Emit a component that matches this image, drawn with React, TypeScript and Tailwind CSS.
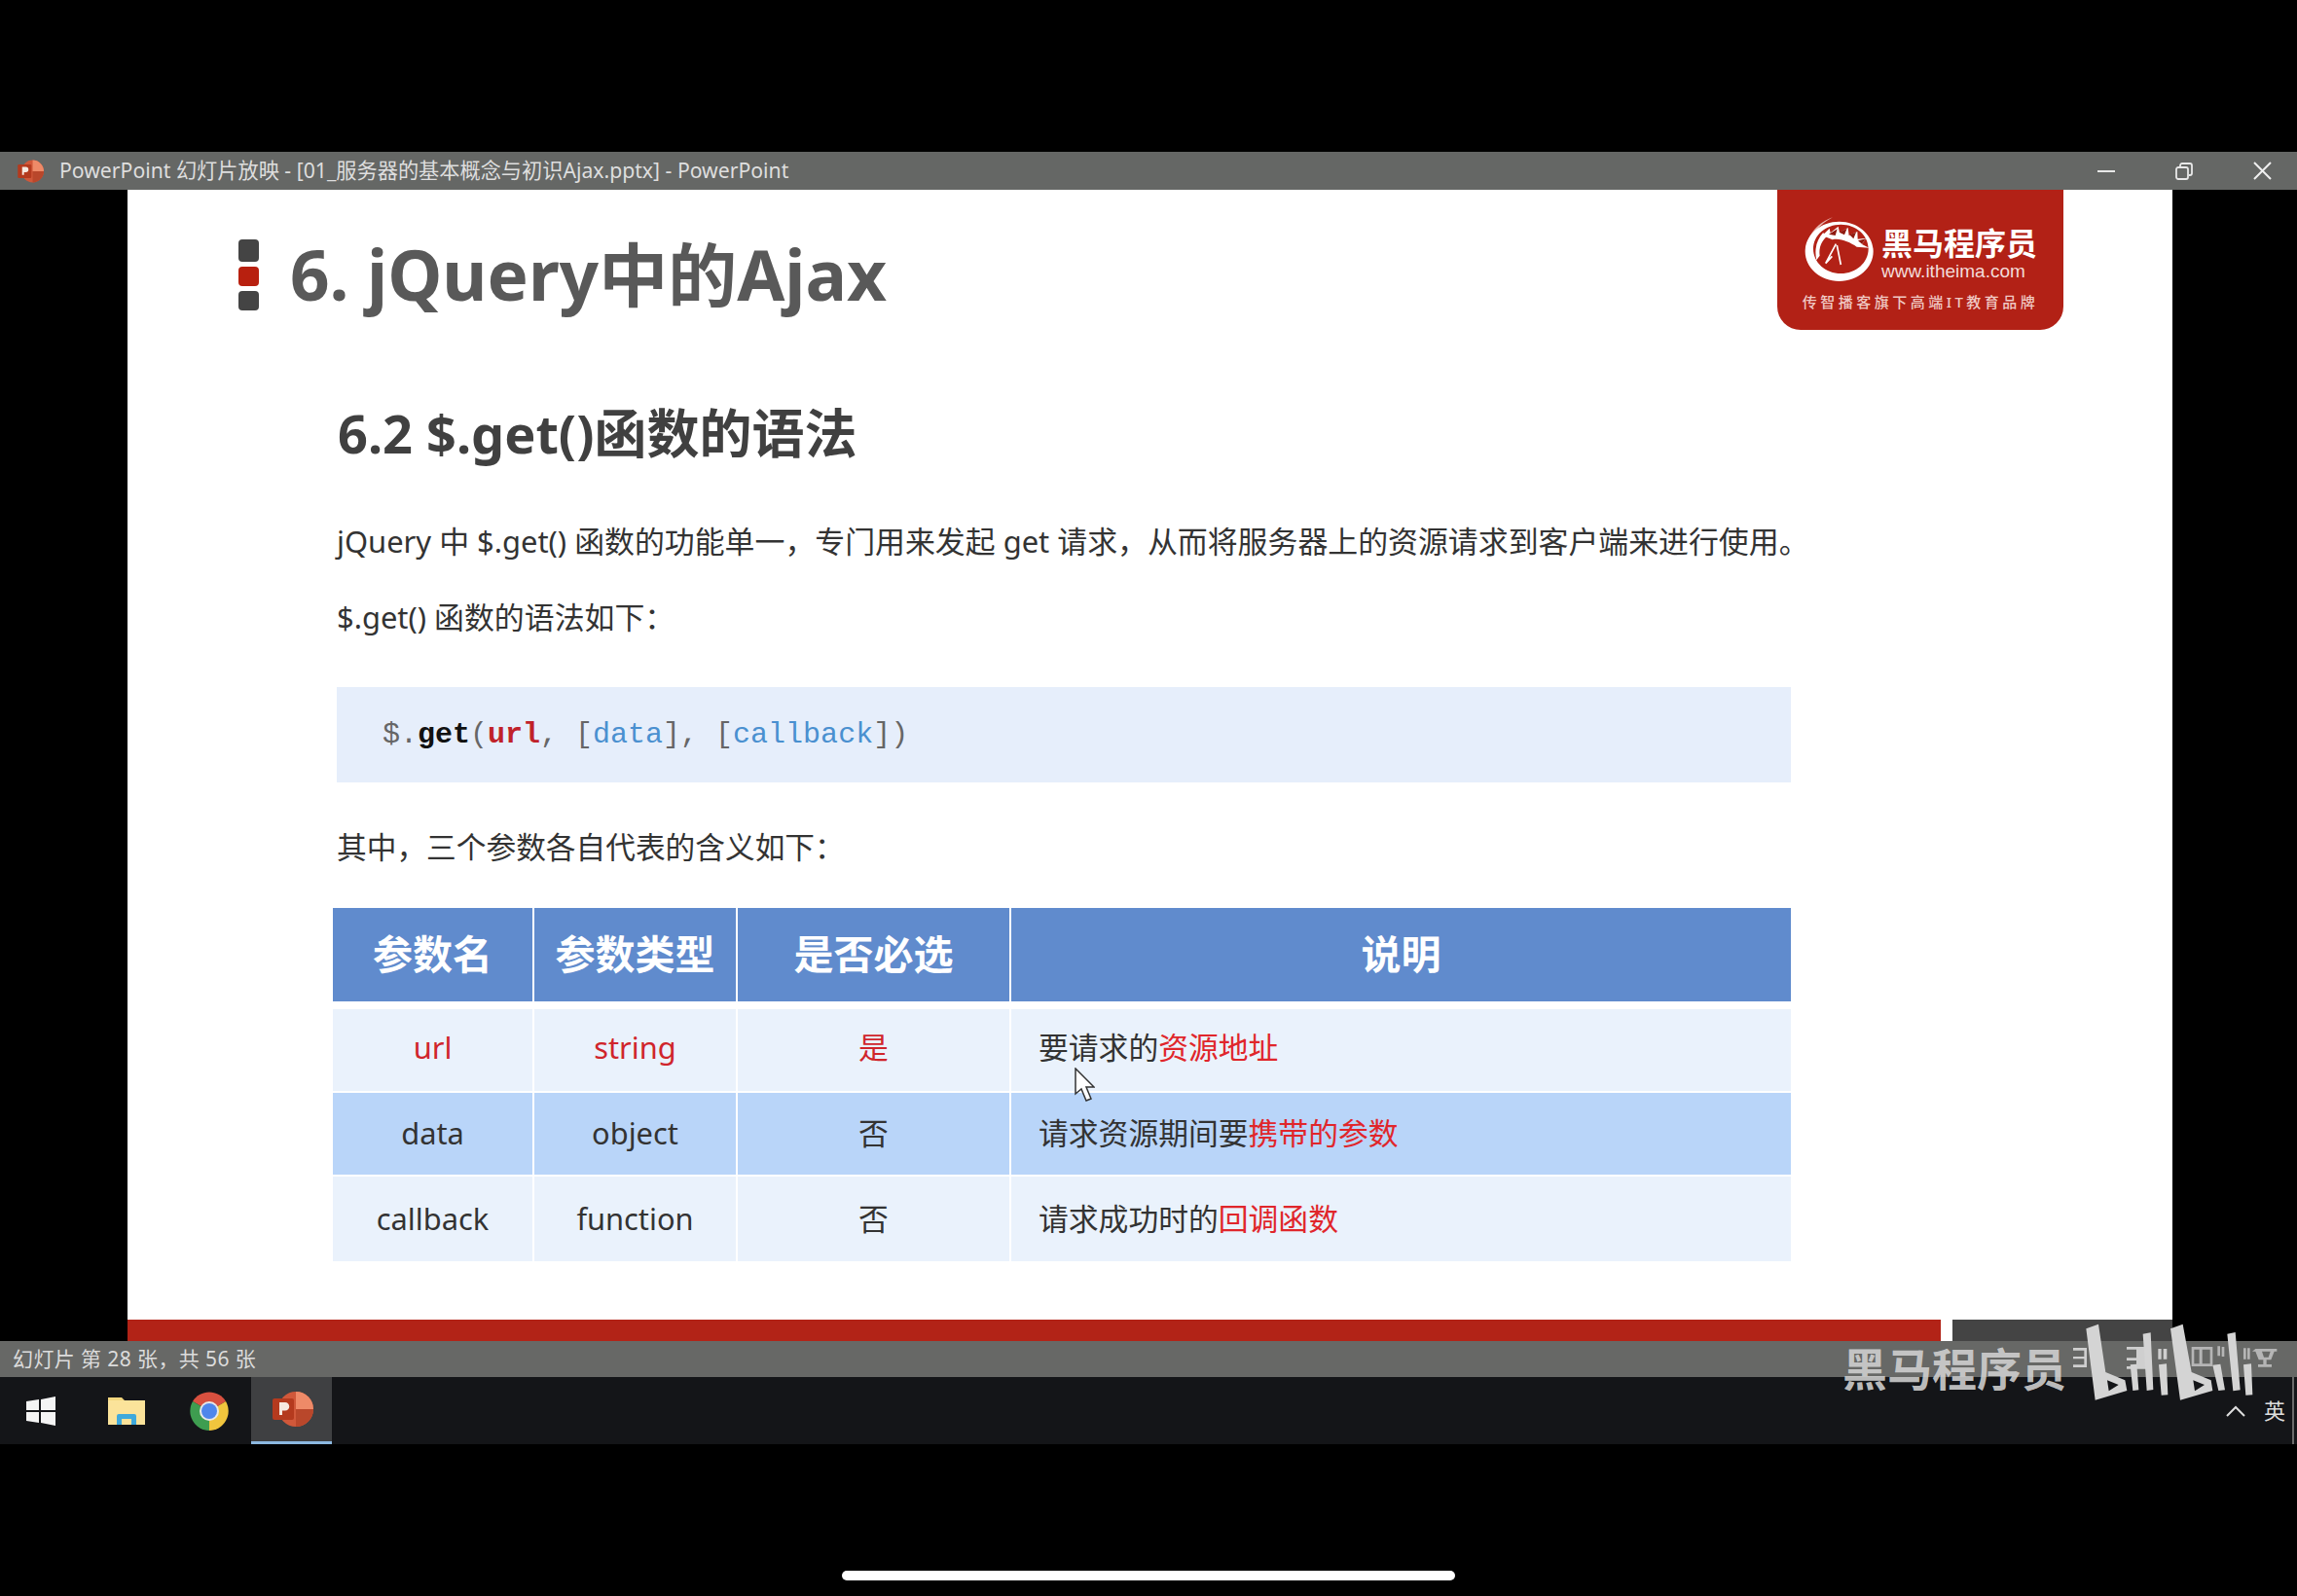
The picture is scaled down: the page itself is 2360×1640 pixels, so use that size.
const PptIcon = ({ size }: { size: number }) => (
  <svg width={size} height={size} viewBox="0 0 44 44">
    <circle cx="26" cy="22" r="18" fill="#d0583a" />
    <path d="M26 4a18 18 0 0 1 18 18H26z" fill="#ee8a68" />
    <path d="M26 22h18a18 18 0 0 1-18 18z" fill="#b9472b" />
    <rect x="2" y="11" width="22" height="22" rx="2" fill="#b43a1e" />
    <path d="M9 28V15h6a4.200 4.200 0 0 1 0 8.500h-3V28z" fill="#f6e8df" />
  </svg>
);

const HorseLogo = () => (
  <svg width="75" height="72" viewBox="40 30 225 216" fill="none">
    <path d="M130 40C85 55 50 95 46 145 56 100 90 60 130 40z" fill="#e8b4ad" />
    <path fillRule="evenodd" d="M150 53c58 0 105 41 105 92s-47 92-105 92S45 196 45 145 92 53 150 53zM155 62c-47 0-85 33-85 75s38 76 85 76 85-34 85-76-38-75-85-75z" fill="#ffffff" />
    <path d="M98 96l22-22 3 14 24-20 4 19 26-15 3 24 26-12 1 23 26-3-13 19 22 11-38-3c-22-14-50-28-75-22z" fill="#ffffff" />
    <path d="M118 92l26-16-6 20zM150 86l24-12-8 20zM182 94l20-8-8 20zM208 112l24-6-12 16z" fill="#8f1a10" />
    <path d="M100 88C82 108 72 136 80 172l10-14c-4-24 6-48 26-62z" fill="#ffffff" />
    <path d="M140 122l-32 60M143 126l12 60M108 182l20-22" stroke="#ffffff" strokeWidth="5" />
  </svg>
);

const BiliLogo = () => (
  <svg width="220" height="100" viewBox="0 0 660 300">
    <g fill="#e2e2e2" opacity="0.85">
      <path fillRule="evenodd" d="M0 105h42v60H0v-8h34v-18H0v-7h34v-19H0z" />
      <path d="M165 102h75v68h-75v-8h30v-18h-30v-8h30v-26h-30z" />
      <path d="M262 108h10v32h-10zM278 108h11v32h-11z" />
    </g>
    <g fill="#c9c9c9" opacity="0.8">
      <path fillRule="evenodd" d="M365 102h65v60h-65zM373 110v44h16v-44zM398 110v44h24v-44z" />
      <path d="M445 100h8v30h-8zM458 102h8v30h-8zM525 106h8v34h-8zM537 106h8v34h-8z" />
      <path fillRule="evenodd" d="M562 108h66v8h-8l-10 26h-14v14h16v8h-42v-8h16v-14h-14l-10-26h-10zM582 116l6 18h14l6-18z" />
    </g>
    <g fill="#d4d4d4">
      <path fillRule="evenodd" d="M40 46L78 32l22 148 60 25 6 32-98 29zM105 205l5 33 30-19z" />
      <path d="M176 157l20-2 6 80-18 2zM215 62l24-4 8 176-20 3zM264 157l24-3 4 96-20 1z" />
      <path fillRule="evenodd" d="M300 46L338 32l27 148 60 25 5 32-100 29zM370 205l5 33 30-19z" />
      <path d="M430 158l24-3 14 80-20 2zM475 62l25-5 15 178-22 3zM525 157l24-3 4 96-21 1z" />
    </g>
  </svg>
);

const Cell = ({ className, children }: { className: string; children: React.ReactNode }) => (
  <div className={`flex items-center ${className}`}>{children}</div>
);

const rows = [
  { name: "url", type: "string", req: "是", pre: "要请求的", hl: "资源地址", red: true, bg: "bg-[#eaf2fc]", h: "h-[84px] pb-0", pad: "pb-[5px]" },
  { name: "data", type: "object", req: "否", pre: "请求资源期间要", hl: "携带的参数", red: false, bg: "bg-[#b9d5f9]", h: "h-[84px]", pad: "pb-[2px]" },
  { name: "callback", type: "function", req: "否", pre: "请求成功时的", hl: "回调函数", red: false, bg: "bg-[#eaf2fc]", h: "h-[87px]", pad: "pb-0" },
];

export default function App() {
  return (
    <div className="relative flex h-[1640px] w-[2360px] flex-col overflow-hidden bg-black font-['Noto_Sans','Noto_Sans_CJK_SC',sans-serif]">
      <div className="h-[156px]" />

      {/* title bar */}
      <div className="flex h-[39px] items-center bg-[#656765] pl-[17px] pr-[26px] text-[21.200px] text-[#dedede]">
        <PptIcon size={28} />
        <span className="mb-[2px] ml-[16px] whitespace-nowrap">PowerPoint 幻灯片放映 - [01_服务器的基本概念与初识Ajax.pptx] - PowerPoint</span>
        <div className="ml-auto flex items-center gap-[62px]">
          <svg width="18" height="18" viewBox="0 0 18 18" stroke="#e8e8e8" strokeWidth="2"><path d="M0 9h18" /></svg>
          <svg width="18" height="18" viewBox="0 0 18 18" fill="none" stroke="#e8e8e8" strokeWidth="1.800"><rect x="1" y="5" width="12" height="12" rx="2" /><path d="M5 4V3a2 2 0 0 1 2-2h8a2 2 0 0 1 2 2v8a2 2 0 0 1-2 2h-1" /></svg>
          <svg width="19" height="19" viewBox="0 0 19 19" stroke="#f0f0f0" strokeWidth="2"><path d="M1 1l17 17M18 1L1 18" /></svg>
        </div>
      </div>

      {/* slide stage */}
      <div className="flex h-[1183px] pl-[131px]">
        <div className="flex w-[2101px] flex-col bg-white">
          <div className="flex h-[144px] items-start justify-between pl-[114px] pr-[112px]">
            <div className="flex items-center pt-[50px]">
              <div className="flex flex-col gap-[5px]">
                <div className="h-[23px] w-[21px] rounded-[4px] bg-[#444444]" />
                <div className="h-[20px] w-[21px] rounded-[4px] bg-[#b8200f]" />
                <div className="h-[20px] w-[21px] rounded-[4px] bg-[#444444]" />
              </div>
              <h1 className="ml-[32px] whitespace-nowrap text-[71px] font-bold leading-[74px] text-[#595959]">6. jQuery中的Ajax</h1>
            </div>
            <div className="flex h-[144px] w-[294px] flex-col items-center rounded-b-[24px] bg-[#b22116] pt-[25px] text-white">
              <div className="flex items-start gap-[5px]">
                <HorseLogo />
                <div className="mt-[11px] flex flex-col items-start">
                  <span className="text-[32px] font-bold leading-[38px]">黑马程序员</span>
                  <span className="font-['Liberation_Sans',sans-serif] text-[19px] leading-[20px] text-[#f3dcd9]">www.itheima.com</span>
                </div>
              </div>
              <span className="mt-[8px] whitespace-nowrap text-[15px] font-medium leading-[20px] tracking-[3.500px] text-[#f0c9c4]">传智播客旗下高端IT教育品牌</span>
            </div>
          </div>

          <div className="flex flex-col pl-[215px] pr-[392px]">
            <h2 className="ml-[1px] mt-[71px] h-[70px] text-[54px] font-bold leading-[70px] text-[#404040]">6.2 $.get()函数的语法</h2>
            <p className="mt-[56px] h-[40px] whitespace-nowrap text-[30.900px] leading-[40px] text-[#333333]">jQuery 中 $.get() 函数的功能单一，专门用来发起 get 请求，从而将服务器上的资源请求到客户端来进行使用。</p>
            <p className="mt-[38px] h-[40px] text-[30.900px] leading-[40px] text-[#333333]">$.get() 函数的语法如下：</p>
            <div className="mt-[52px] flex h-[98px] items-center bg-[#e6eefb] pl-[47px] font-['Liberation_Mono',monospace] text-[30px] text-[#666666]">
              <span>$.</span><b className="text-[#111111]">get</b><span>(</span><b className="text-[#c0222a]">url</b><span>, [</span><span className="text-[#4a90d0]">data</span><span>], [</span><span className="text-[#4a90d0]">callback</span><span>])</span>
            </div>
            <p className="mt-[46px] h-[40px] text-[30.700px] leading-[40px] text-[#333333]">其中，三个参数各自代表的含义如下：</p>

            <div className="ml-[-4px] mt-[43px] flex flex-col text-[30.800px] text-[#333333]">
              <div className="grid h-[96px] grid-cols-[205px_207px_279px_801px] gap-x-[2px] text-[41px] font-bold text-white">
                {["参数名", "参数类型", "是否必选", "说明"].map((t) => (
                  <Cell key={t} className="justify-center bg-[#608bcd]">{t}</Cell>
                ))}
              </div>
              <div className="mt-[8px] flex flex-col gap-y-[2px]">
                {rows.map((r) => (
                  <div key={r.name} className={`grid grid-cols-[205px_207px_279px_801px] gap-x-[2px] ${r.h}`}>
                    <Cell className={`justify-center ${r.bg} ${r.pad} ${r.red ? "text-[#d0252b]" : ""}`}>{r.name}</Cell>
                    <Cell className={`justify-center ${r.bg} ${r.pad} ${r.red ? "text-[#d0252b]" : ""}`}>{r.type}</Cell>
                    <Cell className={`justify-center ${r.bg} ${r.pad} ${r.red ? "text-[#d0252b]" : ""}`}>{r.req}</Cell>
                    <Cell className={`pl-[28px] ${r.bg} ${r.pad}`}>
                      <span>{r.pre}</span>
                      <span className="text-[#e0262b]">{r.hl}</span>
                    </Cell>
                  </div>
                ))}
              </div>
            </div>
          </div>

          <div className="mt-auto flex h-[22px]">
            <div className="w-[1863px] bg-[#b22317]" />
            <div className="w-[12px] bg-white" />
            <div className="flex-1 bg-[#444444]" />
          </div>
        </div>
      </div>

      {/* status bar */}
      <div className="flex h-[37px] items-center bg-[#676866] pl-[13px] text-[21px] tracking-[0.400px] text-[#dcdcdc]">
        <span className="whitespace-nowrap">幻灯片 第 28 张，共 56 张</span>
      </div>

      {/* taskbar */}
      <div className="flex h-[69px] items-center bg-[#141518] pr-[12px]">
        <div className="ml-[27px] w-[84px]">
          <svg width="30" height="30" viewBox="0 0 30 30" fill="#f4f4f4"><path d="M0 5l13-2v11H0zM15 3l15-3v14H15zM0 16h13v11L0 25zM15 16h15v14l-15-3z" /></svg>
        </div>
        <div className="w-[84px]">
          <svg width="38" height="34" viewBox="0 0 38 34"><path d="M0 3h14l3 3h21v25H0z" fill="#f3d77f" /><path d="M0 6h38v25H0z" fill="#fbe39a" /><path d="M9 31v-9a2 2 0 0 1 2-2h16a2 2 0 0 1 2 2v9h-5v-6H14v6z" fill="#3fa9dc" /></svg>
        </div>
        <div className="w-[63px]">
          <svg width="40" height="40" viewBox="0 0 40 40"><path d="M20 20L3 10A20 20 0 0 1 37 10z" fill="#d8503f" /><path d="M20 20L37 10A20 20 0 0 1 20 40z" fill="#f1c53d" /><path d="M20 20L20 40A20 20 0 0 1 3 10z" fill="#3e9d50" /><circle cx="20" cy="20" r="10" fill="#e8e8e8" /><circle cx="20" cy="20" r="8" fill="#4f86ec" /></svg>
        </div>
        <div className="flex h-[69px] w-[83px] items-center justify-center border-b-[3px] border-[#8cb8e0] bg-[#3f4042]">
          <PptIcon size={44} />
        </div>
        <div className="ml-auto flex items-center gap-[19px] text-[22px] text-[#dddddd]">
          <svg width="20" height="12" viewBox="0 0 20 12" fill="none" stroke="#dddddd" strokeWidth="2"><path d="M1 11l9-9 9 9" /></svg>
          <span>英</span>
        </div>
      </div>

      <div className="flex flex-1 items-end justify-center pb-[16px]">
        <div className="h-[10px] w-[630px] rounded-full bg-white" />
      </div>

      {/* overlays: watermark and pointer */}
      <div className="absolute left-[2355px] top-[1415px] h-[69px] w-[2px] bg-[#6b6b6b]" />
      <div className="absolute left-[1893px] top-[1378px] whitespace-nowrap text-[46px] font-bold leading-[56px] text-[#d2d2d2]/90">黑马程序员</div>
      <div className="absolute left-[2130px] top-[1350px]"><BiliLogo /></div>
      <svg className="absolute left-[1103px] top-[1097px]" width="22" height="36" viewBox="0 0 22 36"><path d="M2 1v26l6-5 5 12 5-2-5-12h8z" fill="#fff" stroke="#333" strokeWidth="1.500" /></svg>
    </div>
  );
}
